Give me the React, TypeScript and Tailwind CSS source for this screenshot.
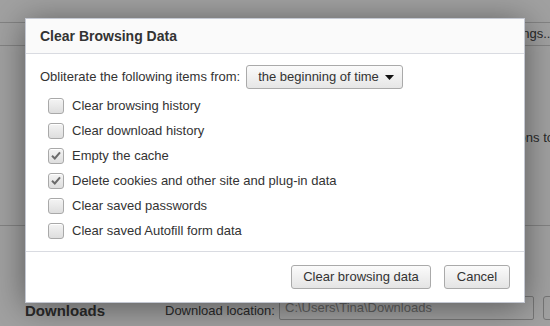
import { useState } from "react";

const items = [
  { label: "Clear browsing history", checked: false },
  { label: "Clear download history", checked: false },
  { label: "Empty the cache", checked: true },
  { label: "Delete cookies and other site and plug-in data", checked: true },
  { label: "Clear saved passwords", checked: false },
  { label: "Clear saved Autofill form data", checked: false },
];

function CheckBox({ checked, onToggle }: { checked: boolean; onToggle: () => void }) {
  return (
    <button
      onClick={onToggle}
      className="w-4 h-4 rounded-[3px] border border-[#a9a9a9] bg-gradient-to-b from-[#f4f4f4] to-[#dedede] shadow-[inset_0_1px_0_#fff] flex items-center justify-center shrink-0"
    >
      {checked && (
        <svg width="10" height="9" viewBox="0 0 10 9">
          <path d="M1 4.8 L3.8 7.5 L9 1.3" fill="none" stroke="#6b6b6b" strokeWidth="2" />
        </svg>
      )}
    </button>
  );
}

export default function App() {
  const [checks, setChecks] = useState(items.map((i) => i.checked));

  return (
    <div
      className="relative w-[550px] h-[326px] overflow-hidden bg-white text-[#333] text-[13px]"
      style={{ fontFamily: '"Liberation Sans", Arial, sans-serif' }}
    >
      {/* settings page behind */}
      <div className="flex flex-col h-full">
        <div className="h-[23px] border-b border-[#d0d0d0]" />
        <div className="h-[23px] flex justify-end border-b border-[#d0d0d0]">
          <div className="w-[240px] border-l border-[#d0d0d0] text-right leading-[22px] text-[#444] -mr-[4px]">
            Content settings...
          </div>
        </div>
        <div className="h-[105px] flex justify-end items-end pb-[4px] -mr-[4px]">
          <span className="text-[#444]">Manage exceptions to</span>
        </div>
        <div className="h-[75px] border-b border-[#d0d0d0]" />
        <div className="flex-1 flex items-end pb-[6px] pl-[25px]">
          <span className="w-[140px] shrink-0 font-bold text-[15px] text-[#444] leading-[18px]">Downloads</span>
          <span className="w-[114px] shrink-0 text-[#444] leading-[18px]">Download location:</span>
          <div className="w-[255px] shrink-0 h-[24px] border border-[#bbb] rounded-[2px] px-[5px] leading-[22px] text-[#999]">
            C:\Users\Tina\Downloads
          </div>
          <div className="ml-[9px] w-[60px] shrink-0 h-[24px] border border-[#bbb] rounded-[3px]" />
        </div>
      </div>

      {/* modal overlay */}
      <div className="absolute inset-0 bg-[rgba(0,0,0,0.37)]" />

      <div className="absolute left-[25px] top-[18px] w-[500px] h-[285px] bg-white border border-[#c4c8d2] shadow-[0_4px_32px_rgba(0,0,0,0.45)] flex flex-col">
        <div className="h-[35px] bg-[#fafafa] border-b border-[#d9dbe1] px-[14px] flex items-center">
          <span className="font-bold text-[14px] text-[#333]">Clear Browsing Data</span>
        </div>

        <div className="flex-1 px-[14px] pt-[11px]">
          <div className="flex items-center gap-[6px]">
            <span>Obliterate the following items from:</span>
            <button className="h-[24px] w-[157px] rounded-[3px] border border-[#aaa] bg-gradient-to-b from-[#fbfbfb] to-[#e6e6e6] flex items-center justify-between pl-[11px] pr-[8px]">
              <span className="text-[#333]">the beginning of time</span>
              <svg width="9" height="5" viewBox="0 0 9 5">
                <path d="M0 0 H9 L4.5 5 Z" fill="#111" />
              </svg>
            </button>
          </div>

          <div className="mt-[4px] flex flex-col">
            {items.map((item, i) => (
              <div key={item.label} className="h-[25px] flex items-center gap-[8px] pl-[8px]">
                <CheckBox
                  checked={checks[i]}
                  onToggle={() => setChecks(checks.map((c, j) => (j === i ? !c : c)))}
                />
                <span>{item.label}</span>
              </div>
            ))}
          </div>
        </div>

        <div className="h-[51px] border-t border-[#d9dbe1] flex items-center justify-end gap-[13px] pr-[14px]">
          <button className="h-[24px] w-[140px] rounded-[3px] border border-[#aaa] bg-gradient-to-b from-[#fbfbfb] to-[#e4e4e4] text-[#333]">
            Clear browsing data
          </button>
          <button className="h-[24px] w-[66px] rounded-[3px] border border-[#aaa] bg-gradient-to-b from-[#fbfbfb] to-[#e4e4e4] text-[#333]">
            Cancel
          </button>
        </div>
      </div>
    </div>
  );
}
